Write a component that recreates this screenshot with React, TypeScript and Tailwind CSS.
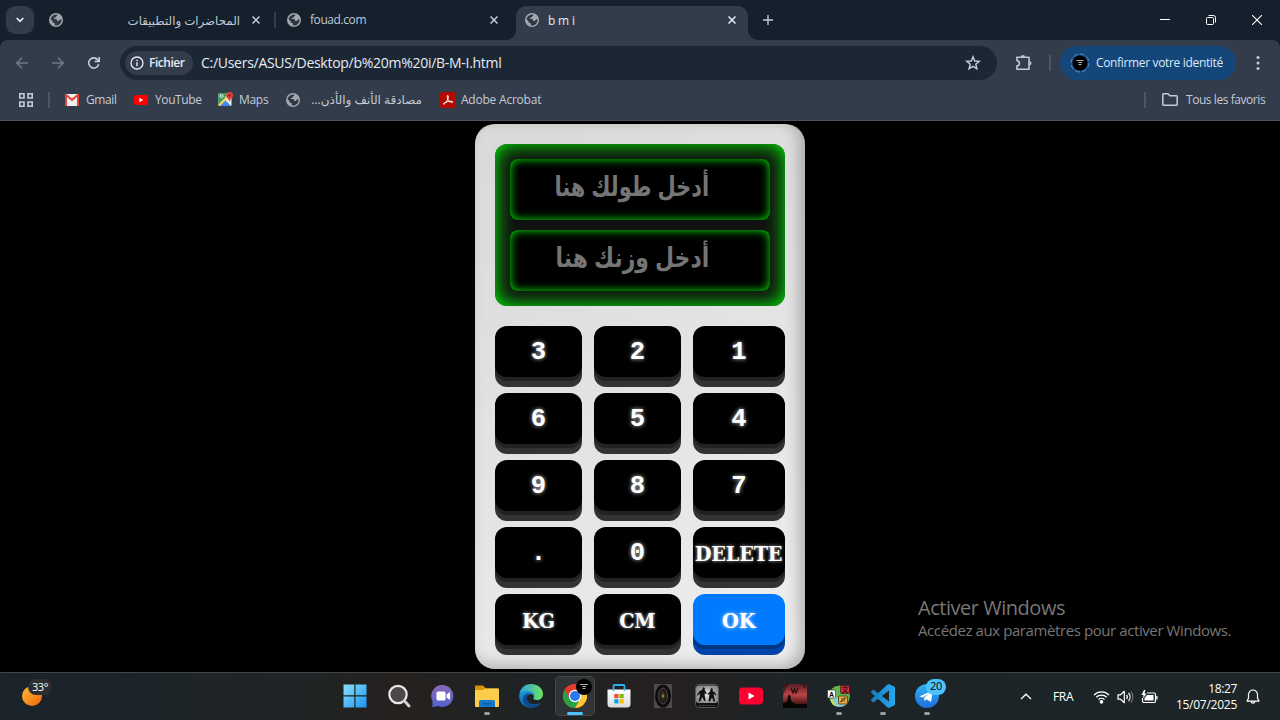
import React from "react";

const UI = "font-['Open_Sans','Noto_Sans','DejaVu_Sans',sans-serif]";

function Globe() {
  return (
    <svg width="14" height="14" viewBox="0 0 14 14" className="shrink-0">
      <circle cx="7" cy="7" r="7" fill="#a3a7ac" />
      <path d="M5.500 1.700 8.300 1.500C8.600 2.400 8 2.900 7.200 3.200 7 4.300 6.500 4.400 5.500 4.500 5.500 5.600 5.100 5.900 4.200 5.900H6.900C8.200 6 8.200 7.200 8.200 7.900H9.500C10.300 7.700 10.500 6.700 11.400 6.400 12.100 6.300 12.400 6.500 12.600 6.900 12.500 9.900 10.400 12 7.900 12.500 7.200 12.600 6.500 12.600 5.900 12.400V11C5.900 10.300 5.300 9.900 4.600 9.900 3.600 9.700 3.600 8.700 3.500 8L1.500 6.200C1.900 4 3.500 2.400 5.500 1.700Z" fill="#2d3846" />
    </svg>
  );
}

function Cross({ color = "#c3cbd8", size = 8 }: { color?: string; size?: number }) {
  return (
    <svg width={size} height={size} viewBox="0 0 8 8" className="shrink-0">
      <path d="M.5.5 7.500 7.500M7.500.5.5 7.500" stroke={color} strokeWidth="1.500" />
    </svg>
  );
}

function TabStrip() {
  return (
    <div className="flex h-10 bg-[#15202c] text-[12px] text-[#c0c9d6]">
      <div className="mt-1.5 ml-1.5 flex size-7 items-center justify-center rounded-[9px] bg-[#323c4b]">
        <svg width="8" height="6" viewBox="0 0 8 6"><path d="M.7 1 4 4.300 7.300 1" fill="none" stroke="#e8edf5" strokeWidth="1.700" /></svg>
      </div>
      <div className="flex h-10 w-[242px] items-center pl-[15px]">
        <Globe />
        <span dir="rtl" className="ml-[9px] w-[168px] shrink-0 whitespace-nowrap text-[11.800px] leading-4 tracking-[-0.1px]">المحاضرات والتطبيقات</span>
        <span className="ml-3 flex"><Cross /></span>
        <span className="ml-[14px] h-4 w-[2px] bg-[#323c4b]" />
      </div>
      <div className="flex h-10 w-[240px] items-center pl-[11px]">
        <Globe />
        <span className="ml-[9px] w-[180px] tracking-[-0.42px]">fouad.com</span>
        <Cross />
      </div>
      <div className="relative mt-1.5 flex h-[34px] w-[232px] items-center rounded-t-[10px] bg-[#323c4b] pb-1.5 pl-[9px] text-[#e6ebf3]">
        <svg className="absolute -left-[10px] bottom-0" width="10" height="10"><path d="M10 0V10H0A10 10 0 0 0 10 0Z" fill="#323c4b" /></svg>
        <svg className="absolute -right-[10px] bottom-0" width="10" height="10"><path d="M0 0V10H10A10 10 0 0 1 0 0Z" fill="#323c4b" /></svg>
        <Globe />
        <span className="ml-[9px] w-[180px] pt-0.5 tracking-[-0.2px]">b m i</span>
        <Cross color="#e6ebf3" />
      </div>
      <div className="flex w-10 items-center justify-center">
        <svg width="10" height="10" viewBox="0 0 10 10"><path d="M5 0V10M0 5H10" stroke="#c0c9d6" strokeWidth="1.400" /></svg>
      </div>
      <div className="ml-auto flex items-center">
        <div className="flex w-[46px] justify-center"><svg width="10" height="10"><path d="M0 4.500H10" stroke="#fff" /></svg></div>
        <div className="flex w-[46px] justify-center">
          <svg width="10" height="10" viewBox="0 0 10 10" fill="none" stroke="#fff"><rect x=".5" y="2.500" width="7" height="7" rx="1" /><path d="M2.500.5H7.500A2 2 0 0 1 9.500 2.500V7.500" /></svg>
        </div>
        <div className="flex w-[46px] justify-center"><svg width="10" height="10"><path d="M0 0 10 10M10 0 0 10" stroke="#fff" strokeWidth="1.100" /></svg></div>
      </div>
    </div>
  );
}

function AddressBar() {
  return (
    <div className="flex h-[46px] items-center rounded-t-[8px] bg-[#323c4b]">
      <div className="flex w-[120px] items-center pl-4">
        <svg width="12" height="12" viewBox="0 0 12 12" fill="none" stroke="#717986" strokeWidth="1.500"><path d="M12 6H1M6 .7.9 6 6 11.300" /></svg>
        <svg className="ml-6" width="12" height="12" viewBox="0 0 12 12" fill="none" stroke="#717986" strokeWidth="1.500"><path d="M0 6H11M6 .7 11.100 6 6 11.300" /></svg>
        <svg className="ml-6" width="12" height="12" viewBox="0 0 12 12" fill="none" stroke="#c6cedb" strokeWidth="1.600"><path d="M10.700 7.300A5.100 5.100 0 1 1 9.800 2.800L11 4.200M11.200 0V4.400H6.800" /></svg>
      </div>
      <div className="flex h-[34px] w-[877px] items-center rounded-full bg-[#1c2735] pl-[5px]">
        <div className="flex h-6 w-[68px] items-center rounded-full bg-[#323c4b] pl-[5px] text-[12px] font-semibold text-[#e6ebf3]">
          <svg width="14" height="14" viewBox="0 0 14 14" fill="none" stroke="#e6ebf3"><circle cx="7" cy="7" r="6" strokeWidth="1.300" /><path d="M7 6.200V10.200M7 3.700V5.200" strokeWidth="1.400" /></svg>
          <span className="ml-[5px] tracking-[-0.48px]">Fichier</span>
        </div>
        <span className="ml-2 w-[764px] pb-px whitespace-nowrap text-[14px] tracking-[-0.28px] text-[#e6ebf3]">C:/Users/ASUS/Desktop/b%20m%20i/B-M-I.html</span>
        <svg width="16" height="16" viewBox="0 0 16 16" fill="none" stroke="#c6cedb" strokeWidth="1.400"><path d="M8 1.800 9.700 6 14.300 6.300 10.800 9.200 11.900 13.700 8 11.300 4.100 13.700 5.200 9.200 1.700 6.300 6.300 6Z" /></svg>
      </div>
      <svg className="ml-[18px]" width="18" height="18" viewBox="0 0 18 18" fill="none" stroke="#c0c9d6" strokeWidth="1.600"><path d="M1.900 3.300H14V15.300H1.900V12.100C5.200 11.300 5.200 7.500 1.900 6.600Z" strokeLinejoin="round" /><path d="M6 3A2 2 0 0 1 10 3M14.500 7.300A2 2 0 0 1 14.500 11.300" fill="#c0c9d6" stroke="none" /></svg>
      <div className="ml-4 h-4 w-[2px] bg-[#4a5566]" />
      <div className="ml-[9px] flex h-[34px] w-[176px] items-center rounded-full bg-[#14467a] pl-[10px] text-[12px] text-[#dce9fb]">
        <svg width="20" height="20" viewBox="0 0 20 20"><circle cx="10" cy="10" r="9" fill="none" stroke="#5b93d0" strokeWidth="1" strokeDasharray="5 2" /><circle cx="10" cy="10" r="7.500" fill="#000" /><path d="M6.500 7.500H13.500M8.500 9.500H12M8.500 11.500H11.500" stroke="#ddd" strokeWidth=".8" /></svg>
        <span className="ml-1.5 whitespace-nowrap tracking-[-0.34px]">Confirmer votre identité</span>
      </div>
      <svg className="ml-5" width="4" height="16" viewBox="0 0 4 16" fill="#c6cedb"><circle cx="2" cy="2.500" r="1.500" /><circle cx="2" cy="8" r="1.500" /><circle cx="2" cy="13.500" r="1.500" /></svg>
    </div>
  );
}

function Bookmarks() {
  return (
    <div className="flex h-[35px] items-center border-b border-[#49525f] bg-[#323c4b] pb-[7px] pl-[19px] text-[12px] text-[#c4cbd6] whitespace-nowrap">
      <svg width="14" height="14" viewBox="0 0 14 14" fill="none" stroke="#c4cbd6" strokeWidth="1.600"><path d="M.8.8H5V5H.8ZM9 .8H13.200V5H9ZM.8 9H5V13.200H.8ZM9 9H13.200V13.200H9Z" /></svg>
      <div className="ml-[15px] h-4 w-[2px] bg-[#4a5566]" />
      <svg className="ml-[15px]" width="14" height="12" viewBox="0 0 14 12"><rect width="14" height="12" rx="1" fill="#f1efef" /><path d="M0 1V12H2V3L7 7.200 12 3V12H14V1A1 1 0 0 0 12.500 0L7 4.500 1.500 0A1 1 0 0 0 0 1Z" fill="#e04437" /></svg>
      <span className="ml-[7px] w-12 tracking-[-0.4px]">Gmail</span>
      <svg width="14" height="10" viewBox="0 0 14 10"><rect width="14" height="10" rx="2" fill="#f00" /><path d="M5.300 2.700V7.300L9.300 5Z" fill="#fff" /></svg>
      <span className="ml-[7px] w-[63px] tracking-[-0.4px]">YouTube</span>
      <svg width="15" height="15" viewBox="0 0 15 15"><rect x=".5" y="1" width="13" height="13" rx="1" fill="#eef1ee" /><path d="M.5 1H9L7 6 .5 13Z" fill="#30a157" /><path d="M1 14 7.200 8 13 14Z" fill="#4285f4" /><path d="M0 13 8 5 9.500 6.500 2 14Z" fill="#ffd54a" /><path d="M11.500 0A3.500 3.500 0 0 1 15 3.500C15 6 12 7 11.500 10 11 7 8 6 8 3.500A3.500 3.500 0 0 1 11.500 0Z" fill="#e04437" /><circle cx="11.500" cy="3.500" r="1.300" fill="#7c241e" /><circle cx="3.500" cy="4" r="1.500" fill="none" stroke="#fff" /></svg>
      <span className="ml-[6px] w-[47px] tracking-[-0.3px]">Maps</span>
      <Globe />
      <span dir="rtl" className="ml-[10px] w-[112px] tracking-[-0.2px]">مصادقة الأنف والأذن...</span>
      <svg className="ml-[18px]" width="16" height="16" viewBox="0 0 16 16"><rect width="16" height="16" rx="2.500" fill="#b30b00" /><path d="M7.500 3.500C8.500 3 8.600 5 8 6.500 7 9 5 12 3.800 12.300 2.500 12 5 10 8 9.500 10.500 9 13 9.200 12.800 10.200 12 11.300 9 9.500 7.900 7.200 7.200 5.800 6.900 4 7.500 3.500Z" fill="none" stroke="#fff" strokeWidth="1" /></svg>
      <span className="ml-[5px] tracking-[-0.22px]">Adobe Acrobat</span>
      <div className="ml-auto h-4 w-[2px] bg-[#4a5566]" />
      <svg className="ml-4" width="16" height="13" viewBox="0 0 16 13" fill="none" stroke="#c4cbd6" strokeWidth="1.500"><path d="M.8 1.500A.7.7 0 0 1 1.500.8H6L7.800 2.800H14.500A.7.7 0 0 1 15.200 3.500V11.500A.7.7 0 0 1 14.500 12.200H1.500A.7.7 0 0 1 .8 11.500Z" /></svg>
      <span className="ml-2 w-[94px] tracking-[-0.44px]">Tous les favoris</span>
    </div>
  );
}

function Display({ hint, fit }: { hint: string; fit: string }) {
  return (
    <div dir="rtl" className="h-[61px] rounded-[8px] bg-black pt-[10px] pr-[61px] text-[27px] leading-9 font-bold whitespace-nowrap text-[#757575] shadow-[inset_0_0_10px_#00f000] font-['Liberation_Sans','DejaVu_Sans',sans-serif]">
      <span className={"inline-block origin-right " + fit}>{hint}</span>
    </div>
  );
}

const keys = ["3", "2", "1", "6", "5", "4", "9", "8", "7", ".", "0", "DELETE", "KG", "CM", "OK"];

function Calculator() {
  return (
    <div className="h-[545px] w-[330px] rounded-[20px] bg-[linear-gradient(145deg,#d8d8d8,#efefef)] p-5 shadow-[inset_-5px_-3px_15px_rgba(0,0,0,0.28),inset_5px_5px_15px_rgba(255,255,255,0.3)]">
      <div className="flex h-[162px] flex-col gap-[10px] rounded-[12px] bg-[#111] p-[15px] shadow-[inset_0_0_20px_#00ff00]">
        <Display hint="أدخل طولك هنا" fit="scale-x-[0.777]" />
        <Display hint="أدخل وزنك هنا" fit="scale-x-[0.812]" />
      </div>
      <div className="mt-5 grid grid-cols-[87px_87px_92px] gap-x-3 gap-y-4">
        {keys.map((k) => (
          <button
            key={k}
            className={
              "flex h-[51px] items-center justify-center rounded-[12px] pt-[3px] text-[25.600px] leading-none font-bold text-white [text-shadow:0_0_4px_rgba(255,255,255,0.75)] font-['Liberation_Mono',monospace] " +
              (k === "OK" ? "bg-[#007bff] shadow-[0_4px_0_#003680,0_10px_0_#0044aa]" : "bg-black shadow-[0_4px_0_#222,0_10px_0_#333]")
            }
          >
            <span className={k.length > 1 ? "inline-block scale-x-[0.94] text-[20.500px] tracking-[-0.2px] font-['DejaVu_Serif',serif]" : ""}>{k}</span>
          </button>
        ))}
      </div>
    </div>
  );
}

function Slot({ children, state = "" }: { children: React.ReactNode; state?: string }) {
  return (
    <div className="relative flex h-[47px] w-11 shrink-0 items-center justify-center pb-[2px]">
      {state === "active" && <div className="absolute top-[3px] left-[2px] h-10 w-10 rounded-[5px] border border-white/10 bg-white/8" />}
      <div className="relative">{children}</div>
      {state === "running" && <div className="absolute bottom-[5px] h-[3px] w-[6px] rounded-full bg-[#9a9da0]" />}
      {state === "active" && <div className="absolute bottom-[5px] h-[3px] w-4 rounded-full bg-[#4cc2ff]" />}
    </div>
  );
}

function Taskbar() {
  return (
    <div className={"relative flex h-12 border-t border-[#43484a] bg-[linear-gradient(90deg,#1b232b_0%,#1f2425_24%,#25211f_31%,#1e2325_43%,#25201f_52%,#1d2428_62%,#1e2529_100%)] text-white " + UI}>
      <div className="relative w-[333px] shrink-0 pt-3 pl-[22px]">
        <svg width="20" height="22" viewBox="0 0 20 22"><defs><linearGradient id="sun" x1="0" y1="0" x2="1" y2="1"><stop stopColor="#f9bd36" /><stop offset="1" stopColor="#f0630b" /></linearGradient></defs><circle cx="10" cy="11" r="10" fill="url(#sun)" /></svg>
        <span className="absolute top-[6px] left-[28px] flex h-4 w-6 items-center justify-center rounded-full bg-[#2c2e30] text-[11px] tracking-[-0.4px]">33°</span>
      </div>
      <Slot>
        <svg width="24" height="24" viewBox="0 0 24 24"><defs><linearGradient id="win" x1="0" y1="0" x2="1" y2="1" ><stop stopColor="#8be0fb" /><stop offset="1" stopColor="#1795f3" /></linearGradient></defs><path d="M.5.5H11.300V11.300H.5ZM12.500.5H23.500V11.300H12.500ZM.5 12.500H11.300V23.500H.5ZM12.500 12.500H23.500V23.500H12.500Z" fill="url(#win)" /></svg>
      </Slot>
      <Slot>
        <svg width="24" height="24" viewBox="0 0 24 24"><circle cx="11" cy="10.500" r="8.700" fill="#4a4846" stroke="#e8e8ea" strokeWidth="2.200" /><path d="M17.500 17 22 22" stroke="#d0d0d3" strokeWidth="3" strokeLinecap="round" /></svg>
      </Slot>
      <Slot>
        <svg width="24" height="24" viewBox="0 0 24 24"><defs><linearGradient id="chat" x1="0" y1="0" x2="0" y2="1"><stop stopColor="#8b69b9" /><stop offset="1" stopColor="#5361ce" /></linearGradient></defs><path d="M12 1A11 11 0 1 1 7 22.100L1.500 23.200V17A11 11 0 0 1 12 1Z" fill="url(#chat)" /><rect x="5.500" y="7.500" width="9" height="9" rx="1.500" fill="#fff" /><path d="M15.500 10.500 19 8V16L15.500 13.500Z" fill="#fff" /></svg>
      </Slot>
      <Slot state="running">
        <svg width="26" height="24" viewBox="0 0 26 24"><path d="M1 2.500A1 1 0 0 1 2 1.500H9L12 4.500H24A1 1 0 0 1 25 5.500V10H1Z" fill="#dc9207" /><path d="M1 6H9L11 4.500H24A1 1 0 0 1 25 5.500V22A1 1 0 0 1 24 23H2A1 1 0 0 1 1 22Z" fill="#fccd4c" /><path d="M5 23V18A2 2 0 0 1 7 16H19A2 2 0 0 1 21 18V23Z" fill="#1279cc" /><path d="M8.500 19H17.500V20.500H8.500Z" fill="#0b59a0" /></svg>
      </Slot>
      <Slot>
        <svg width="24" height="24" viewBox="0 0 24 24"><defs><linearGradient id="e1" x1="0" y1="0" x2="1" y2="0"><stop stopColor="#2ba2df" /><stop offset="1" stopColor="#6be35f" /></linearGradient><linearGradient id="e2" x1="0" y1="0" x2="0" y2="1"><stop stopColor="#1c9ade" /><stop offset="1" stopColor="#0d5da9" /></linearGradient></defs><path d="M.3 10.500C1.200 4 6 0 12 0 19 0 24 4.500 24 10 24 14 21 16 18 16 15.500 16 14 15.300 14.300 14.300 16 12 15 8 10 7.500 5 7 1.500 9 .3 10.500Z" fill="url(#e1)" /><path d="M.2 11C1.500 8 5 6.500 9 6.700 13 7 15.500 10 15 12.500 14.500 9 9 9 8 13 7 17 11 20.500 15.500 20.500 18.500 20.500 20.500 19.500 21.700 18.800 19.500 22 16 24 12 24 5 24-.5 18 .2 11Z" fill="url(#e2)" /><path d="M8 13C7 17 11 20.500 15.500 20.500 18.500 20.500 20.500 19.500 21.700 18.800 19.500 22 16 24 12 24 6 23 3 18 4.500 13 6 9.500 9.500 9 11 9.500 9.300 10 8.300 11.500 8 13Z" fill="#114a8b" /></svg>
      </Slot>
      <Slot state="active">
        <svg width="24" height="24" viewBox="0 0 24 24"><circle cx="12" cy="12" r="12" fill="#e33b2e" /><path d="M1.600 6A12 12 0 0 0 12 24L17.200 15 12 12Z" fill="#28a247" /><path d="M12 24A12 12 0 0 0 22.400 6H12L17.200 15Z" fill="#fcc934" /><path d="M1.600 6A12 12 0 0 1 22.400 6H12L6.800 15Z" fill="#e33b2e" /><circle cx="12" cy="12" r="6.200" fill="#fff" /><circle cx="12" cy="12" r="5" fill="#2b79ea" /></svg>
        <svg className="absolute -top-[5px] left-[13px]" width="16" height="16" viewBox="0 0 16 16"><circle cx="8" cy="8" r="8" fill="#000" /><path d="M4 5.500H12M6.500 7.500H10M6.500 9.500H9.500" stroke="#ddd" strokeWidth=".8" /></svg>
      </Slot>
      <Slot>
        <svg width="24" height="24" viewBox="0 0 24 24"><defs><linearGradient id="store" x1="0" y1="0" x2="0" y2="1"><stop stopColor="#fff" /><stop offset="1" stopColor="#d9dbdf" /></linearGradient></defs><path d="M6.500 6V2A1 1 0 0 1 7.500 1H16.500A1 1 0 0 1 17.500 2V6" fill="none" stroke="#2fb0ec" strokeWidth="1.800" /><path d="M.5 5.500H23.500V20A3.500 3.500 0 0 1 20 23.500H4A3.500 3.500 0 0 1 .5 20Z" fill="url(#store)" /><path d="M7.300 10H11.500V14.200H7.300Z" fill="#f25022" /><path d="M12.500 10H16.700V14.200H12.500Z" fill="#7fba00" /><path d="M7.300 15.200H11.500V19.400H7.300Z" fill="#00a4ef" /><path d="M12.500 15.200H16.700V19.400H12.500Z" fill="#ffb900" /><path d="M6.500 5.500V7M17.500 5.500V7" stroke="#2fb0ec" strokeWidth="1.800" /></svg>
      </Slot>
      <Slot>
        <svg width="18" height="24" viewBox="0 0 18 24"><rect width="18" height="24" fill="#4c4b49" /><ellipse cx="9" cy="12" rx="8" ry="11.500" fill="#0d0d0d" /><ellipse cx="9" cy="12" rx="4.500" ry="8" fill="#211f1c" stroke="#494743" /><path d="M9 7 11 12 9 16 7 12Z" fill="#4a3b25" /><circle cx="9" cy="12" r="1.200" fill="#a47d45" /></svg>
      </Slot>
      <Slot>
        <svg width="24" height="24" viewBox="0 0 24 24"><defs><radialGradient id="duo"><stop stopColor="#eee" /><stop offset="1" stopColor="#8e8e8e" /></radialGradient></defs><rect x=".5" y=".5" width="23" height="23" rx="3" fill="#111" stroke="#555" /><rect x="1" y="1.500" width="22" height="17.500" rx="3" fill="url(#duo)" /><path d="M8 3 10 4 9.500 6 11 8 12 10 9.500 9.500 10.500 17H9L7.500 13 5 17.500H3.500L5 12 4.500 9.500 2.500 12 2 11 4.500 7 7 6ZM16 4 18 5 17.500 7 19.500 8 21.500 11 20.500 11.500 18.500 9.500 20 17.500H18.500L17 13.500 15 17.500H13.500L14.500 10 12.500 11 12.500 10 15 7.500Z" fill="#111" /><path d="M4 21.500H20" stroke="#444" strokeDasharray="2 .7" /></svg>
      </Slot>
      <Slot>
        <svg width="24" height="18" viewBox="0 0 24 18"><rect y=".5" width="24" height="17" rx="4" fill="#ff0033" /><path d="M9.500 5.500V12.500L15.500 9Z" fill="#fff" /></svg>
      </Slot>
      <Slot>
        <svg width="24" height="24" viewBox="0 0 24 24"><defs><linearGradient id="dusk" x1="0" y1="0" x2="0" y2="1"><stop stopColor="#572023" /><stop offset=".45" stopColor="#bb4546" /><stop offset=".75" stopColor="#61201f" /><stop offset="1" stopColor="#0a0505" /></linearGradient></defs><rect width="24" height="24" fill="url(#dusk)" /><path d="M8 4 10 9 11.500 5 13 9 15 4" fill="none" stroke="#271013" strokeWidth="1.300" /><path d="M0 19 4 18 5 12 6 10.500 7.500 12 8 17 12 20 24 20V24H0Z" fill="#080505" /><path d="M0 0H6L2 7 0 12ZM24 0H18L22 5Z" fill="#2b1115" opacity=".6" /></svg>
      </Slot>
      <Slot state="running">
        <svg width="24" height="24" viewBox="0 0 24 24"><circle cx="12.500" cy="12" r="11" fill="#65b34a" stroke="#151515" /><path d="M4 12C9 9 10 17 16 13L21 19C16 25 7 24 4 18Z" fill="#8dccc8" /><path d="M3 15C7 16 7 20 10 22L6 21Z" fill="#d5d94c" /><rect x=".5" y="6" width="8" height="8" rx="1" fill="#fff" stroke="#333" strokeWidth=".7" /><text x="2" y="12.700" fontSize="7" fontWeight="700" fontFamily="Liberation Sans">A</text><rect x="13.500" y="1.500" width="9" height="8" rx="1" fill="#d52b3b" stroke="#222" strokeWidth=".7" /><text x="14.500" y="8" fontSize="7" fontFamily="Noto Sans CJK SC">文</text><rect x="11.500" y="12" width="9" height="8" rx="1" fill="#edaa42" stroke="#222" strokeWidth=".7" /><path d="M13.500 17.500H15V14M17 17.500V14H19" fill="none" stroke="#222" /></svg>
      </Slot>
      <Slot state="running">
        <svg width="24" height="24" viewBox="0 0 24 24"><defs><linearGradient id="code"><stop stopColor="#157cc2" /><stop offset="1" stopColor="#27a6ee" /></linearGradient></defs><path d="M23.150 2.587L18.210.21a1.494 1.494 0 0 0-1.705.29l-9.460 8.630-4.120-3.128a.999.999 0 0 0-1.276.057L.327 7.261A1 1 0 0 0 .326 8.740L3.899 12 .326 15.260a1 1 0 0 0 .001 1.479L1.650 17.940a.999.999 0 0 0 1.276.057l4.120-3.128 9.460 8.630a1.492 1.492 0 0 0 1.704.290l4.942-2.377A1.500 1.500 0 0 0 24 20.060V3.939a1.500 1.500 0 0 0-.850-1.352zm-5.146 14.861L10.826 12l7.178-5.448v10.896z" fill="url(#code)" /></svg>
      </Slot>
      <Slot state="running">
        <svg width="24" height="24" viewBox="0 0 24 24"><defs><linearGradient id="tg" x1="0" y1="0" x2="0" y2="1"><stop stopColor="#2ab5f2" /><stop offset="1" stopColor="#1f6dde" /></linearGradient></defs><circle cx="12" cy="12" r="12" fill="url(#tg)" /><path d="M4.500 12.200 18 6.500 16 18 11.500 15.200 9.500 17 9 13.800 14.500 9.500 7.500 13.500Z" fill="#fff" /></svg>
        <span className="absolute -top-[5px] left-[11px] flex h-4 w-5 items-center justify-center rounded-full bg-[#4cc2ff] text-[11px] tracking-[-0.2px] text-black">20</span>
      </Slot>
      <div className="ml-auto flex h-[47px] items-center text-[12px]">
        <svg width="12" height="7" viewBox="0 0 12 7"><path d="M1 6 6 1.200 11 6" fill="none" stroke="#fff" strokeWidth="1.300" /></svg>
        <span className="ml-[21px] w-[40px] text-[12px] tracking-[-0.35px]">FRA</span>
        <svg width="17" height="14" viewBox="0 0 17 14" fill="none" stroke="#fff" strokeWidth="1.300"><path d="M1 5A10.500 10.500 0 0 1 16 5M3.300 7.300A7.300 7.300 0 0 1 13.700 7.300M5.500 9.600A4.300 4.300 0 0 1 11.500 9.600" /><circle cx="8.500" cy="11.800" r="1.200" fill="#fff" /></svg>
        <svg className="ml-[7px]" width="17" height="14" viewBox="0 0 17 14" fill="none" stroke="#fff" strokeWidth="1.200"><path d="M1 4.800H3.500L7.300 1.300V12.700L3.500 9.200H1Z" strokeLinejoin="round" /><path d="M9.500 5A3 3 0 0 1 9.500 9M11.500 3A6 6 0 0 1 11.500 11" /><path d="M13.700 1.300A8.500 8.500 0 0 1 13.700 12.700" stroke="#6c7073" /></svg>
        <svg className="ml-[7px]" width="17" height="14" viewBox="0 0 17 14"><path d="M6 3H13A1.500 1.500 0 0 1 14.500 4.500V11A1.500 1.500 0 0 1 13 12.500H3A1.500 1.500 0 0 1 1.500 11V8" fill="none" stroke="#fff" strokeWidth="1.200" /><path d="M6 5H12.500V10.500H3.500V8ZM15.200 6H16.500V9.500H15.200ZM3 0 .5 5H2.500L2 8.500 5.500 3.500H3.500L4.500 0Z" fill="#fff" /></svg>
        <div className="ml-[13px] w-[66px] text-right text-[12px] leading-4 tracking-[-0.37px] whitespace-nowrap">18:27<br /><span className="tracking-[-0.26px]">15/07/2025</span></div>
        <svg className="mr-[20px] ml-[9px]" width="14" height="16" viewBox="0 0 14 16" fill="none" stroke="#fff" strokeWidth="1.200"><path d="M7 1A4.500 4.500 0 0 0 2.500 5.500V9L1 12.200H13L11.500 9V5.500A4.500 4.500 0 0 0 7 1ZM5.300 12.500A1.700 1.700 0 0 0 8.700 12.500" strokeLinejoin="round" /></svg>
      </div>
    </div>
  );
}

export default function App() {
  return (
    <div className={"flex h-[720px] w-[1280px] flex-col overflow-hidden bg-black " + UI}>
      <div className="bg-[#15202c]">
        <TabStrip />
        <AddressBar />
      </div>
      <Bookmarks />
      <main className="relative flex h-[551px] justify-center pt-[3px]">
        <Calculator />
        <div className="absolute top-[474px] left-[918px] whitespace-nowrap text-[#777]">
          <div className="text-[20px] leading-[26px] tracking-[-0.47px]">Activer Windows</div>
          <div className="-mt-px text-[15px] leading-5 tracking-[-0.41px]">Accédez aux paramètres pour activer Windows.</div>
        </div>
      </main>
      <Taskbar />
    </div>
  );
}
